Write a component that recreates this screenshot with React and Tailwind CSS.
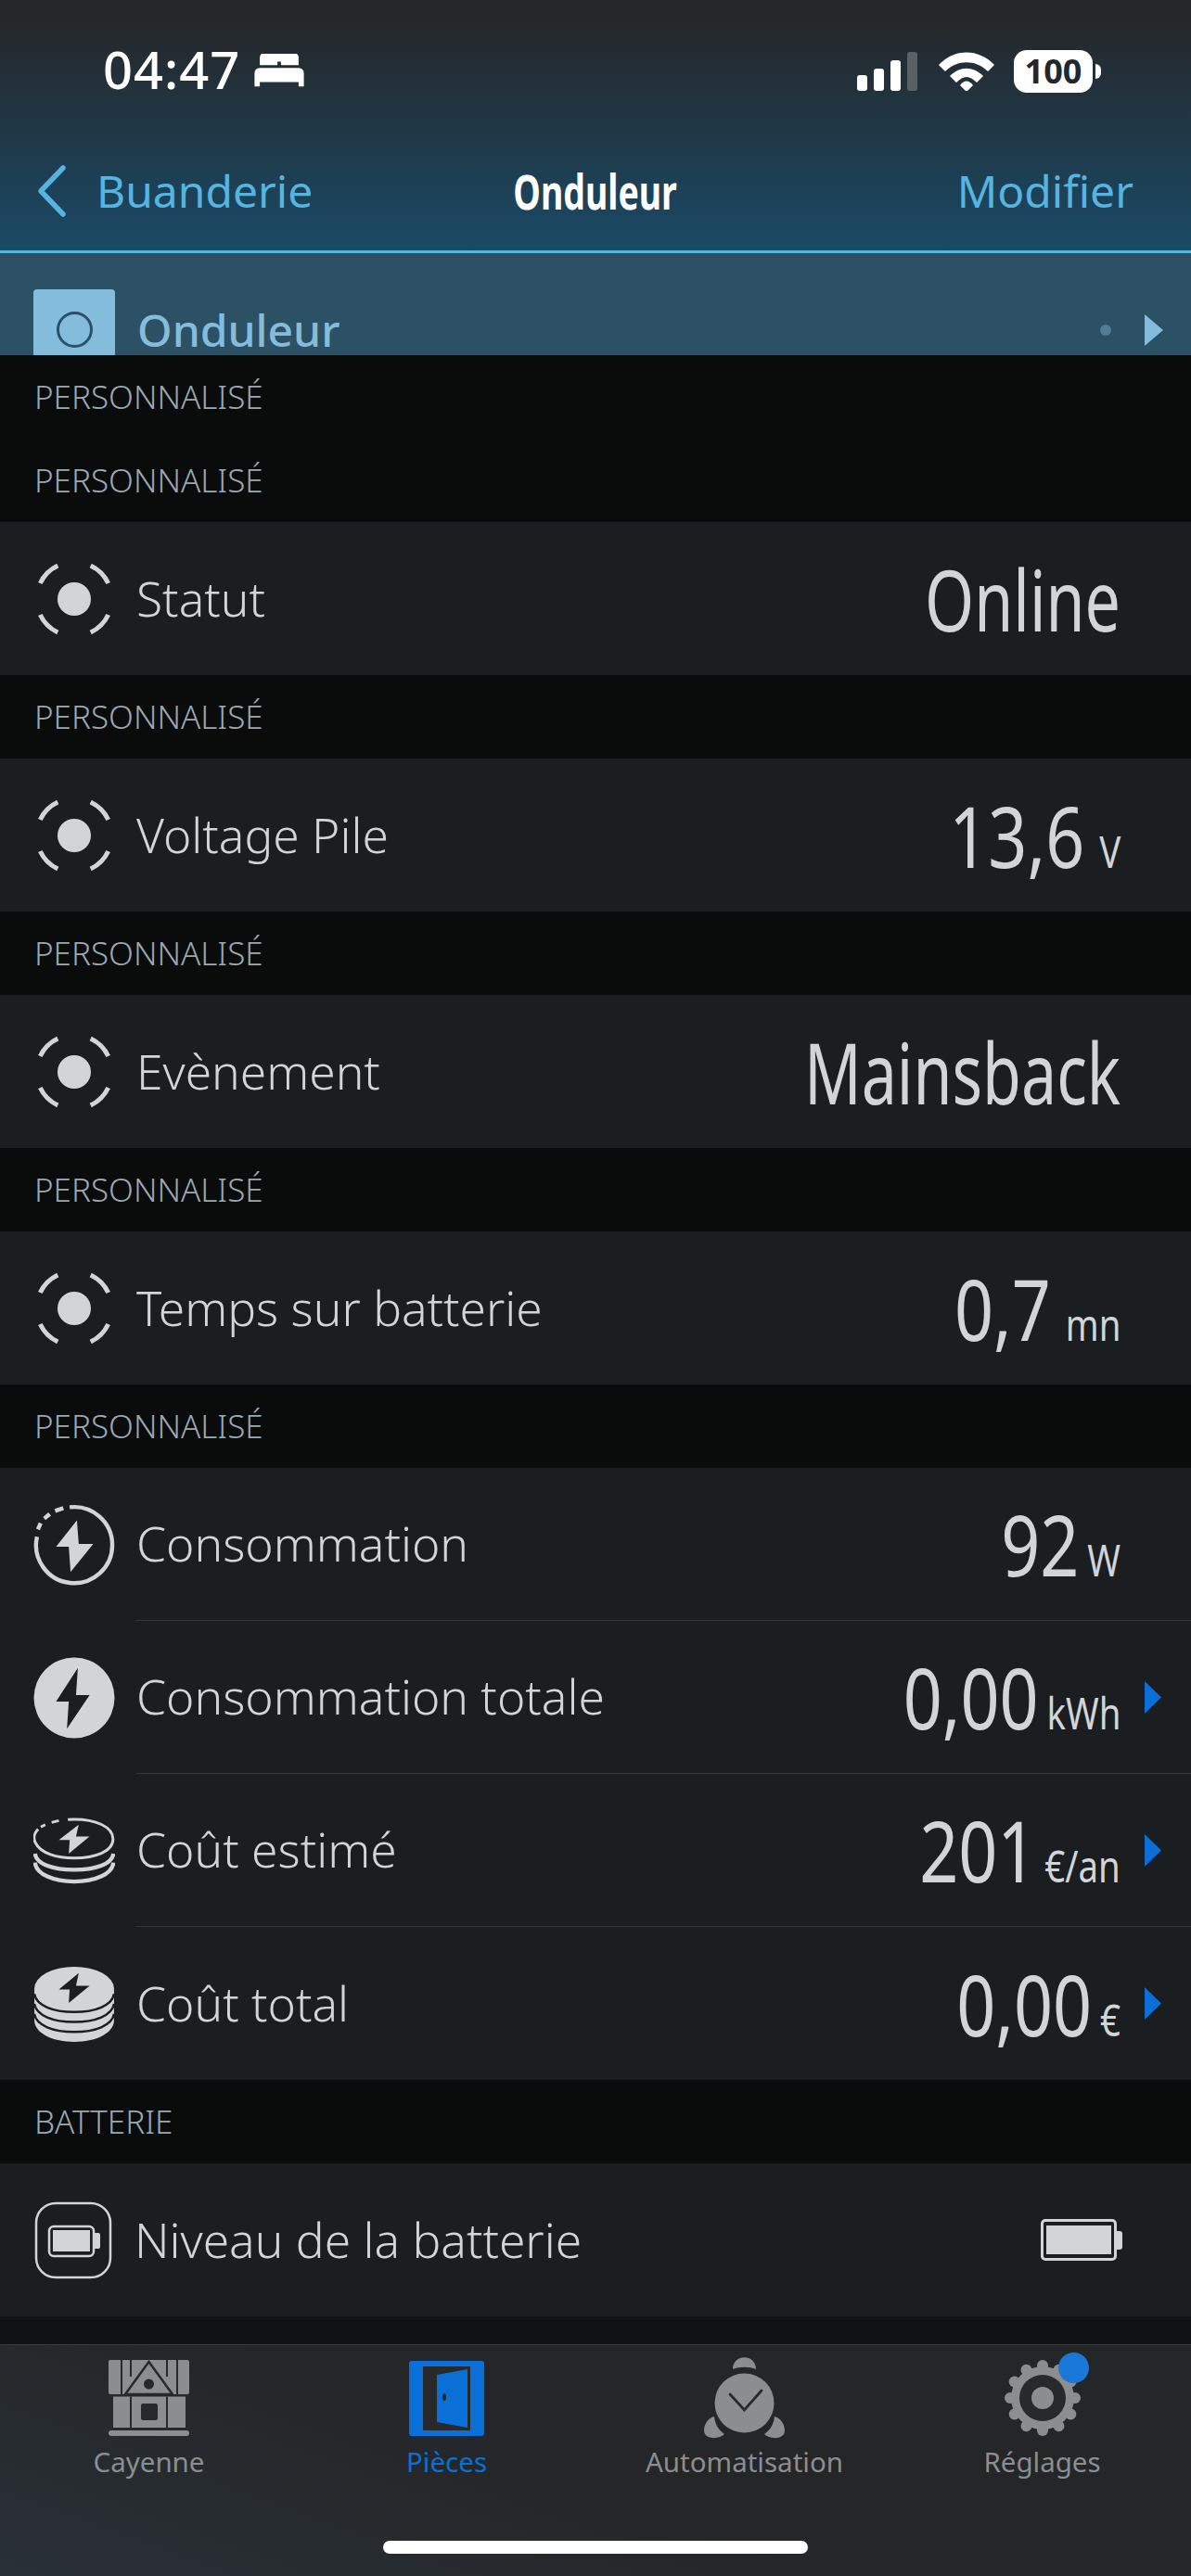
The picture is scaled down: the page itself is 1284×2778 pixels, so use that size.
import React from "react";

const sans = "font-['Noto_Sans','Open_Sans',sans-serif]";
const light = "#d2d5d8";
const rowBg = "#1a1e21";

function StatusIcon() {
  return (
    <svg viewBox="0 0 86 86" className="h-[86px] w-[86px] shrink-0">
      <circle cx="43" cy="43" r="18" fill={light} />
      <g fill="none" stroke={light} strokeWidth="5">
        <path d="M6.3 26 A40 40 0 0 1 25.3 7" />
        <path d="M60.7 7 A40 40 0 0 1 79.7 26" />
        <path d="M79.7 60 A40 40 0 0 1 60.7 79" />
        <path d="M25.3 79 A40 40 0 0 1 6.3 60" />
      </g>
    </svg>
  );
}

function ConsoIcon() {
  return (
    <svg viewBox="0 0 90 90" className="h-[88px] w-[88px] shrink-0">
      <path d="M4 36 A42 42 0 1 0 40 3.5" fill="none" stroke={light} strokeWidth="4.5" />
      <path d="M33 4.5 L24 7.5 M18 11 L12 16 M8 21 L5 28" fill="none" stroke={light} strokeWidth="4.5" />
      <path d="M48 18 L25 47 H39 L41 75 L66 44 H50 Z" fill={light} />
    </svg>
  );
}

function ConsoTotalIcon() {
  return (
    <svg viewBox="0 0 90 90" className="h-[88px] w-[88px] shrink-0">
      <circle cx="45" cy="45" r="44.5" fill={light} />
      <path d="M49 12 L25 49 H39 L37 79 L62 42 H47 Z" fill={rowBg} />
    </svg>
  );
}

function CoinsIcon({ filled }) {
  if (filled) {
    return (
      <svg viewBox="0 0 90 84" className="h-[82px] w-[88px] shrink-0">
        <path d="M1 25 A44 24 0 0 1 89 25 V60 C89 75 68 84 45 84 C22 84 1 75 1 60 Z" fill={light} />
        <g fill="none" stroke={rowBg} strokeWidth="2.5">
          <path d="M1 31 C3 44 22 51 45 51 C68 51 87 44 89 31" />
          <path d="M1 42 C3 55 22 62 45 62 C68 62 87 55 89 42" />
          <path d="M1 53 C3 66 22 73 45 73 C68 73 87 66 89 53" />
        </g>
        <path d="M50 8 L28 26 H40 L39 41 L62 22 H47 Z" fill={rowBg} />
      </svg>
    );
  }
  return (
    <svg viewBox="0 0 90 74" className="h-[72px] w-[88px] shrink-0">
      <g fill="none" stroke={light}>
        <path d="M1.5 40 C3 52 22 58 45 58 C68 58 87 52 88.5 40" strokeWidth="4.5" />
        <path d="M1.5 50 C3 63 22 71 45 71 C68 71 87 63 88.5 50" strokeWidth="4.5" />
        <path d="M5 13 C0 18 0 24 2 28 C8 40 26 45 45 45 C68 45 88 38 88 24 C88 10 68 2 45 2 C43 2 41 2 38 2.3" strokeWidth="3" />
        <path d="M28 3.5 L20 5.5 M13 8 L8 10.5" strokeWidth="3" />
      </g>
      <path d="M50 8 L28 25 H40 L39 40 L62 21 H47 Z" fill={light} />
    </svg>
  );
}

function BatteryIcon() {
  return (
    <svg viewBox="0 0 84 84" className="h-[84px] w-[84px] shrink-0">
      <rect x="2" y="2" width="80" height="80" rx="21" fill="none" stroke={light} strokeWidth="2.5" />
      <rect x="16" y="27" width="48" height="32" rx="5" fill="none" stroke={light} strokeWidth="2.5" />
      <rect x="20" y="31" width="40" height="23" fill={light} />
      <path d="M65 34 H69 a2 2 0 0 1 2 2 V49 a2 2 0 0 1 -2 2 H65 Z" fill={light} />
    </svg>
  );
}

function Chevron() {
  return (
    <svg viewBox="0 0 18 35" className="h-[35px] w-[18px] shrink-0">
      <path d="M0 0 L18 17.5 L0 35 Z" fill="#0a6fd6" />
    </svg>
  );
}

function SectionLabel({ children }) {
  return (
    <div className="flex h-[90px] items-center pl-[37px] text-[35px] font-light text-[#9aa8b2]">
      {children}
    </div>
  );
}

function Value({ value, unit, gap, narrow }) {
  return (
    <span className={`ml-auto flex origin-right items-baseline text-[92px] leading-none text-[#d2d5d8] ${narrow ? "scale-x-[0.74]" : "scale-x-[0.8]"}`}>
      <span>{value}</span>
      {unit && <span className={`text-[48px] leading-none ${gap}`}>{unit}</span>}
    </span>
  );
}

function BigRow({ label, value, unit, narrow }) {
  return (
    <div className="flex h-[165px] items-center bg-[#1a1e21] pl-[37px] pr-[76px]">
      <StatusIcon />
      <span className="ml-[24px] text-[51.5px] font-light text-[#d2d5d8]">{label}</span>
      <Value value={value} unit={unit} gap="ml-[20px]" narrow={narrow} />
    </div>
  );
}

function EnergyRow({ icon, label, value, unit, arrow, divider }) {
  return (
    <div className="flex h-[165px] items-center pl-[36px]">
      <div className="flex w-[88px] shrink-0 justify-center">{icon}</div>
      <div className={`ml-[23px] flex h-full flex-1 items-center pr-[32px] ${divider ? "border-b border-[#33383c]" : ""}`}>
        <span className="text-[51.5px] font-light text-[#d2d5d8]">{label}</span>
        <Value value={value} unit={unit} gap="ml-[11px]" />
        <span className="ml-[26px] flex w-[18px] justify-start">{arrow ? <Chevron /> : null}</span>
      </div>
    </div>
  );
}

function StatusBar() {
  return (
    <div className="flex h-[100px] items-end justify-between pl-[111px] pr-[97px]">
      <div className="flex items-center gap-[14px] text-white">
        <span className="text-[56px] font-medium leading-[52px] tracking-[1px]">04:47</span>
        <svg viewBox="0 0 56 40" className="mt-[6px] h-[38px] w-[56px]">
          <path d="M6 4 a5 5 0 0 1 5 -5 H45 a5 5 0 0 1 5 5 V13 H30 V9 H26 V13 H6 Z" fill="#fff" />
          <path d="M0 22 a6 6 0 0 1 6 -6 H50 a6 6 0 0 1 6 6 V37 H50 V32 H6 V37 H0 Z" fill="#fff" />
        </svg>
      </div>
      <div className="flex items-center">
        <svg viewBox="0 0 66 42" className="h-[42px] w-[66px]">
          <rect x="0" y="25" width="11" height="17" rx="3" fill="#fff" />
          <rect x="18" y="18" width="11" height="24" rx="3" fill="#fff" />
          <rect x="36" y="9" width="11" height="33" rx="3" fill="#fff" />
          <rect x="54" y="0" width="11" height="42" rx="3" fill="#5a6165" />
        </svg>
        <svg viewBox="0 0 60 42" className="ml-[22px] h-[42px] w-[60px]">
          <path d="M0 14 C17 -4 43 -4 60 14 L53 21 C40 8 20 8 7 21 Z" fill="#fff" />
          <path d="M12 26 C23 15 37 15 48 26 L41 33 C33 25 27 25 19 33 Z" fill="#fff" />
          <path d="M23 36 C27 30 33 30 37 36 L30 43 Z" fill="#fff" />
        </svg>
        <div className="ml-[21px] flex h-[46px] w-[85px] items-center justify-center rounded-[14px] bg-white">
          <span className="text-[36px] font-bold leading-none text-[#20282d]">100</span>
        </div>
        <div className="ml-[3px] h-[16px] w-[6px] rounded-r-full bg-white" />
      </div>
    </div>
  );
}

function NavBar() {
  return (
    <div className="grid h-[170px] grid-cols-[1fr_auto_1fr] items-center px-[38px] pt-[42px] text-[#55b4e0]">
      <div className="flex items-center">
        <svg viewBox="0 0 34 58" className="h-[58px] w-[34px]">
          <path d="M30 4 L6 29 L30 54" fill="none" stroke="#55b4e0" strokeWidth="5.5" strokeLinecap="round" strokeLinejoin="round" />
        </svg>
        <span className="ml-[32px] text-[48px]">Buanderie</span>
      </div>
      <span className="scale-x-[0.72] text-[52px] font-bold text-white">Onduleur</span>
      <span className="mr-[24px] justify-self-end text-[48px]">Modifier</span>
    </div>
  );
}

function RoomHeader() {
  return (
    <div className="flex h-[110px] items-start bg-[#2c5064] pl-[36px] pr-[30px]">
      <div className="mt-[39px] flex h-[71px] w-[88px] justify-center rounded-t-[4px] bg-[#84bddb] pt-[24px]">
        <div className="h-[39px] w-[39px] rounded-full border-[3px] border-[#2c5064]" />
      </div>
      <span className="ml-[24px] mt-[59px] text-[48px] font-medium leading-none text-[#84bddb]">Onduleur</span>
      <div className="ml-auto mt-[77px] h-[12px] w-[12px] rounded-full bg-[#4f7f98]" />
      <svg viewBox="0 0 20 34" className="ml-[36px] mt-[66px] h-[34px] w-[20px]">
        <path d="M0 0 L20 17 L0 34 Z" fill="#84bddb" />
      </svg>
    </div>
  );
}

function Tab({ label, active, children }) {
  return (
    <div className="flex flex-col items-center">
      <div className="flex h-[84px] items-center">{children}</div>
      <span className={`mt-[9px] text-[29.5px] leading-[36px] ${active ? "text-[#0a6fd6]" : "text-[#8b8e90]"}`}>{label}</span>
    </div>
  );
}

const gray = "#8b8e90";
const dark = "#28292b";
const teeth = [0, 30, 60, 90, 120, 150, 180, 210, 240, 270, 300, 330];

function TabBar() {
  return (
    <div className="flex h-[250px] flex-col border-t border-[#3a3d40] bg-[linear-gradient(200deg,#242628_50%,#293036_100%)]">
      <div className="grid grid-cols-4 pt-[15px]">
        <Tab label="Cayenne">
          <svg viewBox="0 0 87 82" className="h-[82px] w-[87px]">
            <rect x="0" y="0" width="87" height="37" rx="2" fill={gray} />
            <path d="M14 0 V37 M24 0 V18 M63 0 V18 M74 0 V37" stroke={dark} strokeWidth="2" />
            <path d="M43.5 2 L18 37 H69 Z" fill={gray} stroke={dark} strokeWidth="2.5" />
            <circle cx="43.5" cy="26" r="5.5" fill={dark} />
            <rect x="5" y="39.5" width="78" height="33.5" fill={gray} />
            <path d="M24 39.5 V73 M63 39.5 V73" stroke={dark} strokeWidth="2" />
            <rect x="35" y="47" width="18" height="18" rx="2" fill={dark} />
            <rect x="0" y="76" width="87" height="6" rx="3" fill={gray} />
          </svg>
        </Tab>
        <Tab label="Pièces" active>
          <svg viewBox="0 0 81 81" className="h-[81px] w-[81px]">
            <rect x="0" y="0" width="81" height="81" rx="3" fill="#0a6fd6" />
            <rect x="15" y="6" width="51" height="69" rx="1" fill={dark} />
            <path d="M30 15 L63 9 V72 L30 66 Z" fill="#0a6fd6" />
            <ellipse cx="38" cy="39" rx="2" ry="4" fill={dark} />
          </svg>
        </Tab>
        <Tab label="Automatisation">
          <svg viewBox="0 0 89 88" className="h-[88px] w-[89px]">
            <path d="M32 13 C32 -4 57 -4 57 13 C50 10 39 10 32 13 Z" fill={gray} />
            <circle cx="44.5" cy="49.5" r="32" fill={gray} />
            <path d="M12 64 C3 66 -1 78 2 83 C6 89 18 88 23 83 C16 78 13 72 12 64 Z" fill={gray} />
            <path d="M77 64 C86 66 90 78 87 83 C83 89 71 88 66 83 C73 78 76 72 77 64 Z" fill={gray} />
            <path d="M29 40 L44.5 57 L63 36" fill="none" stroke={dark} strokeWidth="2.8" strokeLinecap="round" />
          </svg>
        </Tab>
        <Tab label="Réglages">
          <div className="relative">
            <svg viewBox="0 0 82 84" className="h-[84px] w-[82px]">
              <circle cx="41" cy="42" r="34" fill={gray} />
              {teeth.map((deg) => (
                <circle key={deg} cx="41" cy="7" r="6" fill={gray} transform={`rotate(${deg} 41 42)`} />
              ))}
              <circle cx="41" cy="42" r="25" fill={dark} />
              <circle cx="41" cy="42" r="12" fill={gray} />
            </svg>
            <div className="absolute left-[58px] top-[-7px] h-[33px] w-[33px] rounded-full bg-[#1a78d8]" />
          </div>
        </Tab>
      </div>
      <div className="mb-[24px] mt-auto flex justify-center">
        <div className="h-[14px] w-[458px] rounded-full bg-white" />
      </div>
    </div>
  );
}

export default function App() {
  return (
    <div className={`flex h-[2778px] w-[1284px] flex-col overflow-hidden bg-[#0a0b0b] ${sans}`}>
      <div className="bg-[linear-gradient(180deg,#25282b_0%,#25282b_10%,#1a4a66_100%)]">
        <StatusBar />
        <NavBar />
      </div>
      <div className="h-[3px] bg-[#55b4e0]" />
      <RoomHeader />

      <SectionLabel>PERSONNALISÉ</SectionLabel>
      <SectionLabel>PERSONNALISÉ</SectionLabel>
      <BigRow label="Statut" value="Online" narrow />
      <SectionLabel>PERSONNALISÉ</SectionLabel>
      <BigRow label="Voltage Pile" value="13,6" unit="V" />
      <SectionLabel>PERSONNALISÉ</SectionLabel>
      <BigRow label="Evènement" value="Mainsback" narrow />
      <SectionLabel>PERSONNALISÉ</SectionLabel>
      <BigRow label="Temps sur batterie" value="0,7" unit="mn" />
      <SectionLabel>PERSONNALISÉ</SectionLabel>

      <div className="bg-[#1a1e21]">
        <EnergyRow icon={<ConsoIcon />} label="Consommation" value="92" unit="W" divider />
        <EnergyRow icon={<ConsoTotalIcon />} label="Consommation totale" value="0,00" unit="kWh" arrow divider />
        <EnergyRow icon={<CoinsIcon />} label="Coût estimé" value="201" unit="€/an" arrow divider />
        <EnergyRow icon={<CoinsIcon filled />} label="Coût total" value="0,00" unit="€" arrow />
      </div>

      <SectionLabel>BATTERIE</SectionLabel>
      <div className="flex h-[165px] items-center bg-[#1a1e21] pl-[37px] pr-[74px]">
        <BatteryIcon />
        <span className="ml-[24px] text-[51.5px] font-light text-[#d2d5d8]">Niveau de la batterie</span>
        <div className="ml-auto flex items-center">
          <div className="flex h-[45px] w-[82px] items-center justify-center rounded-[5px] border-[3px] border-[#d2d5d8]">
            <div className="h-[31px] w-[70px] bg-[#d2d5d8]" />
          </div>
          <div className="h-[20px] w-[6px] rounded-r-[3px] bg-[#d2d5d8]" />
        </div>
      </div>
      <div className="h-[30px] bg-[#101213]" />
      <TabBar />
    </div>
  );
}
